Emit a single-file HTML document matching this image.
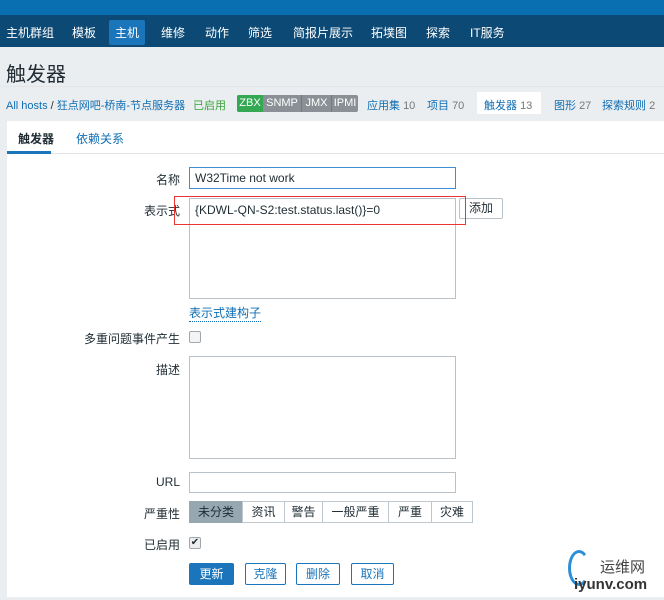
<!DOCTYPE html><html><head><meta charset="utf-8"><style>
*{margin:0;padding:0;box-sizing:border-box}
body{width:664px;height:600px;overflow:hidden;background:#ebeef0;font-family:"Liberation Sans","Noto Sans CJK SC",sans-serif;font-size:12px;color:#1f2c33;position:relative}
.a{position:absolute;white-space:nowrap}
.top{left:0;top:0;width:664px;height:15px;background:#0a6fb1}
.nav{left:0;top:15px;width:664px;height:32px;background:#0c4a75}
.nav span{position:absolute;top:9px;color:#fff;font-size:12px}
.lnk{color:#0f6eb4}
.bc{font-size:11px;top:97px}
.inp{position:absolute;background:#fff;border:1px solid #b8c2c8}
.lbl{position:absolute;right:484px;text-align:right;font-size:12px}
.btn{position:absolute;height:22px;border:1px solid #1a75bb;color:#1a75bb;background:#fff;text-align:center;line-height:20px;border-radius:2px}
.sev{position:absolute;top:501px;height:22px;border:1px solid #bfc8ce;background:#fff;text-align:center;line-height:20px}
.bd{position:absolute;top:0;height:17px;text-align:center}
</style></head><body>
<div class="a top"></div>
<div class="a nav">
<span style="left:6px">主机群组</span><span style="left:72px">模板</span>
<span style="left:109px;top:5px;padding:4px 6px;background:#1a75bb;border-radius:2px">主机</span>
<span style="left:161px">维修</span><span style="left:205px">动作</span><span style="left:248px">筛选</span>
<span style="left:293px">简报片展示</span><span style="left:371px">拓墣图</span><span style="left:426px">探索</span><span style="left:470px">IT服务</span>
</div>
<div class="a" style="left:6px;top:58px;font-size:20px;color:#1f2c33">触发器</div>
<div class="a" style="left:0;top:86px;width:664px;height:1px;background:#e2e6e9"></div>
<div class="a bc" style="left:6px"><span class="lnk">All hosts</span> / <span class="lnk">狂点网吧-桥南-节点服务器</span></div>
<div class="a bc" style="left:193px;color:#3aa43a">已启用</div>
<div class="a" style="left:237px;top:95px;width:121px;height:17px;border-radius:2px;overflow:hidden;font-size:11px;line-height:17px;color:#fff;background:#8a9095">
<span class="bd" style="left:0;width:26px;background:#34a853">ZBX</span><span class="bd" style="left:26px;width:38px">SNMP</span><span class="bd" style="left:64px;width:30px;border-left:1px solid #777">JMX</span><span class="bd" style="left:94px;width:27px;border-left:1px solid #777">IPMI</span></div>
<div class="a bc" style="left:367px"><span class="lnk">应用集</span> <span style="color:#777">10</span></div>
<div class="a bc" style="left:427px"><span class="lnk">项目</span> <span style="color:#777">70</span></div>
<div class="a" style="left:477px;top:92px;width:64px;height:22px;background:#fff"></div>
<div class="a bc" style="left:484px"><span class="lnk">触发器</span> <span style="color:#777">13</span></div>
<div class="a bc" style="left:554px"><span class="lnk">图形</span> <span style="color:#777">27</span></div>
<div class="a bc" style="left:602px"><span class="lnk">探索规则</span> <span style="color:#777">2</span></div>
<div class="a" style="left:7px;top:121px;width:657px;height:476px;background:#fff"></div>
<div class="a" style="left:7px;top:153px;width:657px;height:1px;background:#e2e6e9"></div>
<div class="a" style="left:18px;top:130px;font-weight:bold">触发器</div>
<div class="a" style="left:7px;top:151px;width:44px;height:3px;background:#1a75bb"></div>
<div class="a lnk" style="left:76px;top:130px">依赖关系</div>
<div class="lbl" style="top:171px">名称</div>
<div class="inp" style="left:189px;top:167px;width:267px;height:22px;border-color:#3f8ed1;padding:3px 5px;font-size:12px">W32Time not work</div>
<div class="lbl" style="top:202px">表示式</div>
<div class="inp" style="left:189px;top:198px;width:267px;height:101px;padding:4px 5px">{KDWL-QN-S2:test.status.last()}=0</div>
<div class="btn" style="left:459px;top:198px;width:44px;height:21px;border-color:#b8c2c8;color:#1f2c33;line-height:19px">添加</div>
<div class="a" style="left:174px;top:196px;width:292px;height:29px;border:1px solid #e33"></div>
<div class="a lnk" style="left:189px;top:304px;border-bottom:1px dotted #0f6eb4">表示式建构子</div>
<div class="lbl" style="top:330px">多重问题事件产生</div>
<div class="a" style="left:189px;top:331px;width:12px;height:12px;border:1px solid #a0a8ae;border-radius:2px;background:#f4f4f4"></div>
<div class="lbl" style="top:361px">描述</div>
<div class="inp" style="left:189px;top:356px;width:267px;height:103px"></div>
<div class="lbl" style="top:475px">URL</div>
<div class="inp" style="left:189px;top:472px;width:267px;height:21px"></div>
<div class="lbl" style="top:505px">严重性</div>
<div class="sev" style="left:189px;width:54px;background:#97a7b2;border-color:#97a7b2">未分类</div>
<div class="sev" style="left:242px;width:43px">资讯</div>
<div class="sev" style="left:284px;width:39px">警告</div>
<div class="sev" style="left:322px;width:67px">一般严重</div>
<div class="sev" style="left:388px;width:44px">严重</div>
<div class="sev" style="left:431px;width:42px">灾难</div>
<div class="lbl" style="top:536px">已启用</div>
<div class="a" style="left:189px;top:537px;width:12px;height:12px;border:1px solid #a0a8ae;border-radius:2px;background:#eee;font-size:10px;line-height:10px;text-align:center">✔</div>
<div class="btn" style="left:189px;top:563px;width:45px;background:#1a75bb;color:#fff">更新</div>
<div class="btn" style="left:245px;top:563px;width:41px">克隆</div>
<div class="btn" style="left:296px;top:563px;width:44px">删除</div>
<div class="btn" style="left:351px;top:563px;width:43px">取消</div>
<div class="a" style="left:568px;top:550px;width:22px;height:36px;border:3px solid #2a8fd8;border-radius:50%;border-right-color:transparent"></div>
<div class="a" style="left:600px;top:556px;font-size:15px;color:#444">运维网</div>
<div class="a" style="left:574px;top:576px;font-size:15px;color:#333;font-weight:bold">iyunv.com</div>
</body></html>
